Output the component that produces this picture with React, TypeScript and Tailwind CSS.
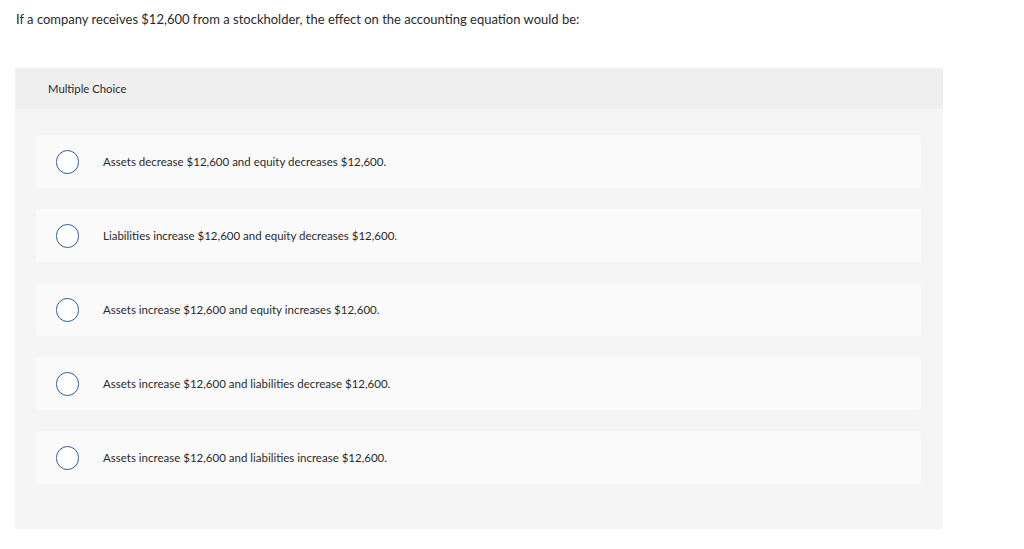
const options = [
  "Assets decrease $12,600 and equity decreases $12,600.",
  "Liabilities increase $12,600 and equity decreases $12,600.",
  "Assets increase $12,600 and equity increases $12,600.",
  "Assets increase $12,600 and liabilities decrease $12,600.",
  "Assets increase $12,600 and liabilities increase $12,600.",
];

export default function App() {
  return (
    <div className="min-h-screen bg-white font-['Lato',sans-serif] text-[#2a2a2a]">
      {/* Question */}
      <p className="pl-4 pt-[11px] text-[13px] leading-[17px]">
        If a company receives $12,600 from a stockholder, the effect on the accounting equation would be:
      </p>

      {/* Answer panel */}
      <div className="ml-[15px] mt-[40px] w-[928px] rounded-[3px] bg-[#f5f5f5] pb-[45px]">
        <div className="flex h-[41px] items-center rounded-t-[3px] bg-[#efefef] pl-[33px] pt-[1px] text-[11.3px]">
          Multiple Choice
        </div>

        <div className="flex flex-col gap-[21px] pl-[21px] pr-[22px] pt-[26px]">
          {options.map((text, i) => (
            <label
              key={i}
              className="flex h-[53px] items-center rounded-[3px] bg-[#fafafa]"
            >
              <span className="ml-[20px] h-[24px] w-[23px] shrink-0 rounded-full border border-[#2d5d9b] bg-white" />
              <span className="ml-[24px] text-[11.5px]">{text}</span>
            </label>
          ))}
        </div>
      </div>
    </div>
  );
}
